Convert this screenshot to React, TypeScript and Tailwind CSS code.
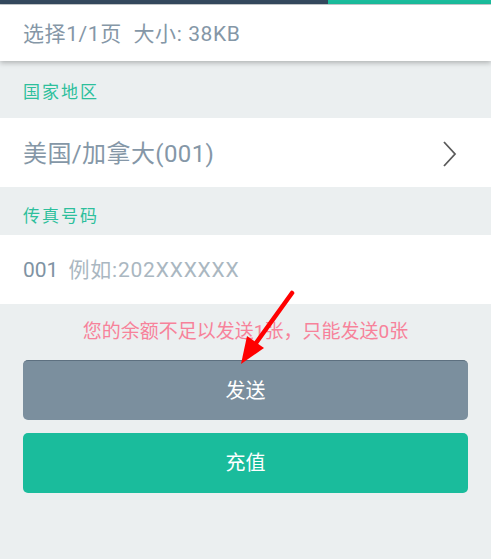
import React from "react";

function Chevron() {
    return (
        <svg width="16" height="28" viewBox="0 0 16 28" className="shrink-0">
            <path d="M2 2 L13 14 L2 26" fill="none" stroke="#5a5a5a" strokeWidth="1.8" />
        </svg>
    );
}

function Arrow() {
    // red annotation arrow pointing at the send button
    return (
        <svg
            className="absolute left-0 top-0 pointer-events-none"
            width="491"
            height="559"
            viewBox="0 0 491 559">
            <line x1="292" y1="293" x2="256" y2="343" stroke="#ff0000" strokeWidth="4.5" strokeLinecap="round" />
            <polygon points="241,364 247,336 264,348" fill="#ff0000" />
        </svg>
    );
}

export default function App() {
    const font = { fontFamily: 'Roboto, "Noto Sans CJK SC", sans-serif' };

    return (
        <div className="relative w-[491px] h-[559px] overflow-hidden bg-[#ebeff0]" style={font}>
            <div className="flex h-[4px]">
                <div className="w-[328px] bg-[#34495e]" />
                <div className="flex-1 bg-[#1abc9c]" />
            </div>
            <div className="h-[1px] bg-[#c9cdcf]" />

            <div className="h-[56px] bg-white flex items-center px-[23px] pt-[4px] shadow-[0_2px_5px_rgba(0,0,0,0.25)] relative z-10">
                <span className="text-[21px] tracking-[0.6px] text-[#8597a7] whitespace-pre">选择1/1页  大小: 38KB</span>
            </div>

            <div className="h-[57px] flex items-center px-[23px] pt-[6px]">
                <span className="text-[17px] tracking-[2px] text-[#2dbf9c]">国家地区</span>
            </div>

            <div className="h-[69px] bg-white flex items-center justify-between pl-[23px] pr-[33px] pt-[2px]">
                <span className="text-[24px] tracking-[0.4px] text-[#8597a7]">美国/加拿大(001)</span>
                <Chevron />
            </div>

            <div className="h-[48px] flex items-center px-[23px] pt-[11px]">
                <span className="text-[17px] tracking-[2px] text-[#2dbf9c]">传真号码</span>
            </div>

            <div className="h-[69px] bg-white flex items-center px-[23px] pt-[2px]">
                <span className="text-[21px] text-[#7f93a3]">001</span>
                <span className="text-[21px] tracking-[0.8px] text-[#aab7c1] ml-[10px]">例如:202XXXXXX</span>
            </div>

            <div className="px-[23px]">
                <div className="h-[56px] flex items-center justify-center pt-[1px]">
                    <span className="text-[19px] text-[#f7829a]">您的余额不足以发送1张，只能发送0张</span>
                </div>
                <button className="w-full h-[60px] rounded-[5px] bg-[#7b8f9e] border-t border-[#5d7080] text-white text-[20px]">
                    发送
                </button>
                <button className="w-full h-[60px] mt-[13px] rounded-[5px] bg-[#1abc9c] text-white text-[20px]">
                    充值
                </button>
            </div>

            <Arrow />
        </div>
    );
}
